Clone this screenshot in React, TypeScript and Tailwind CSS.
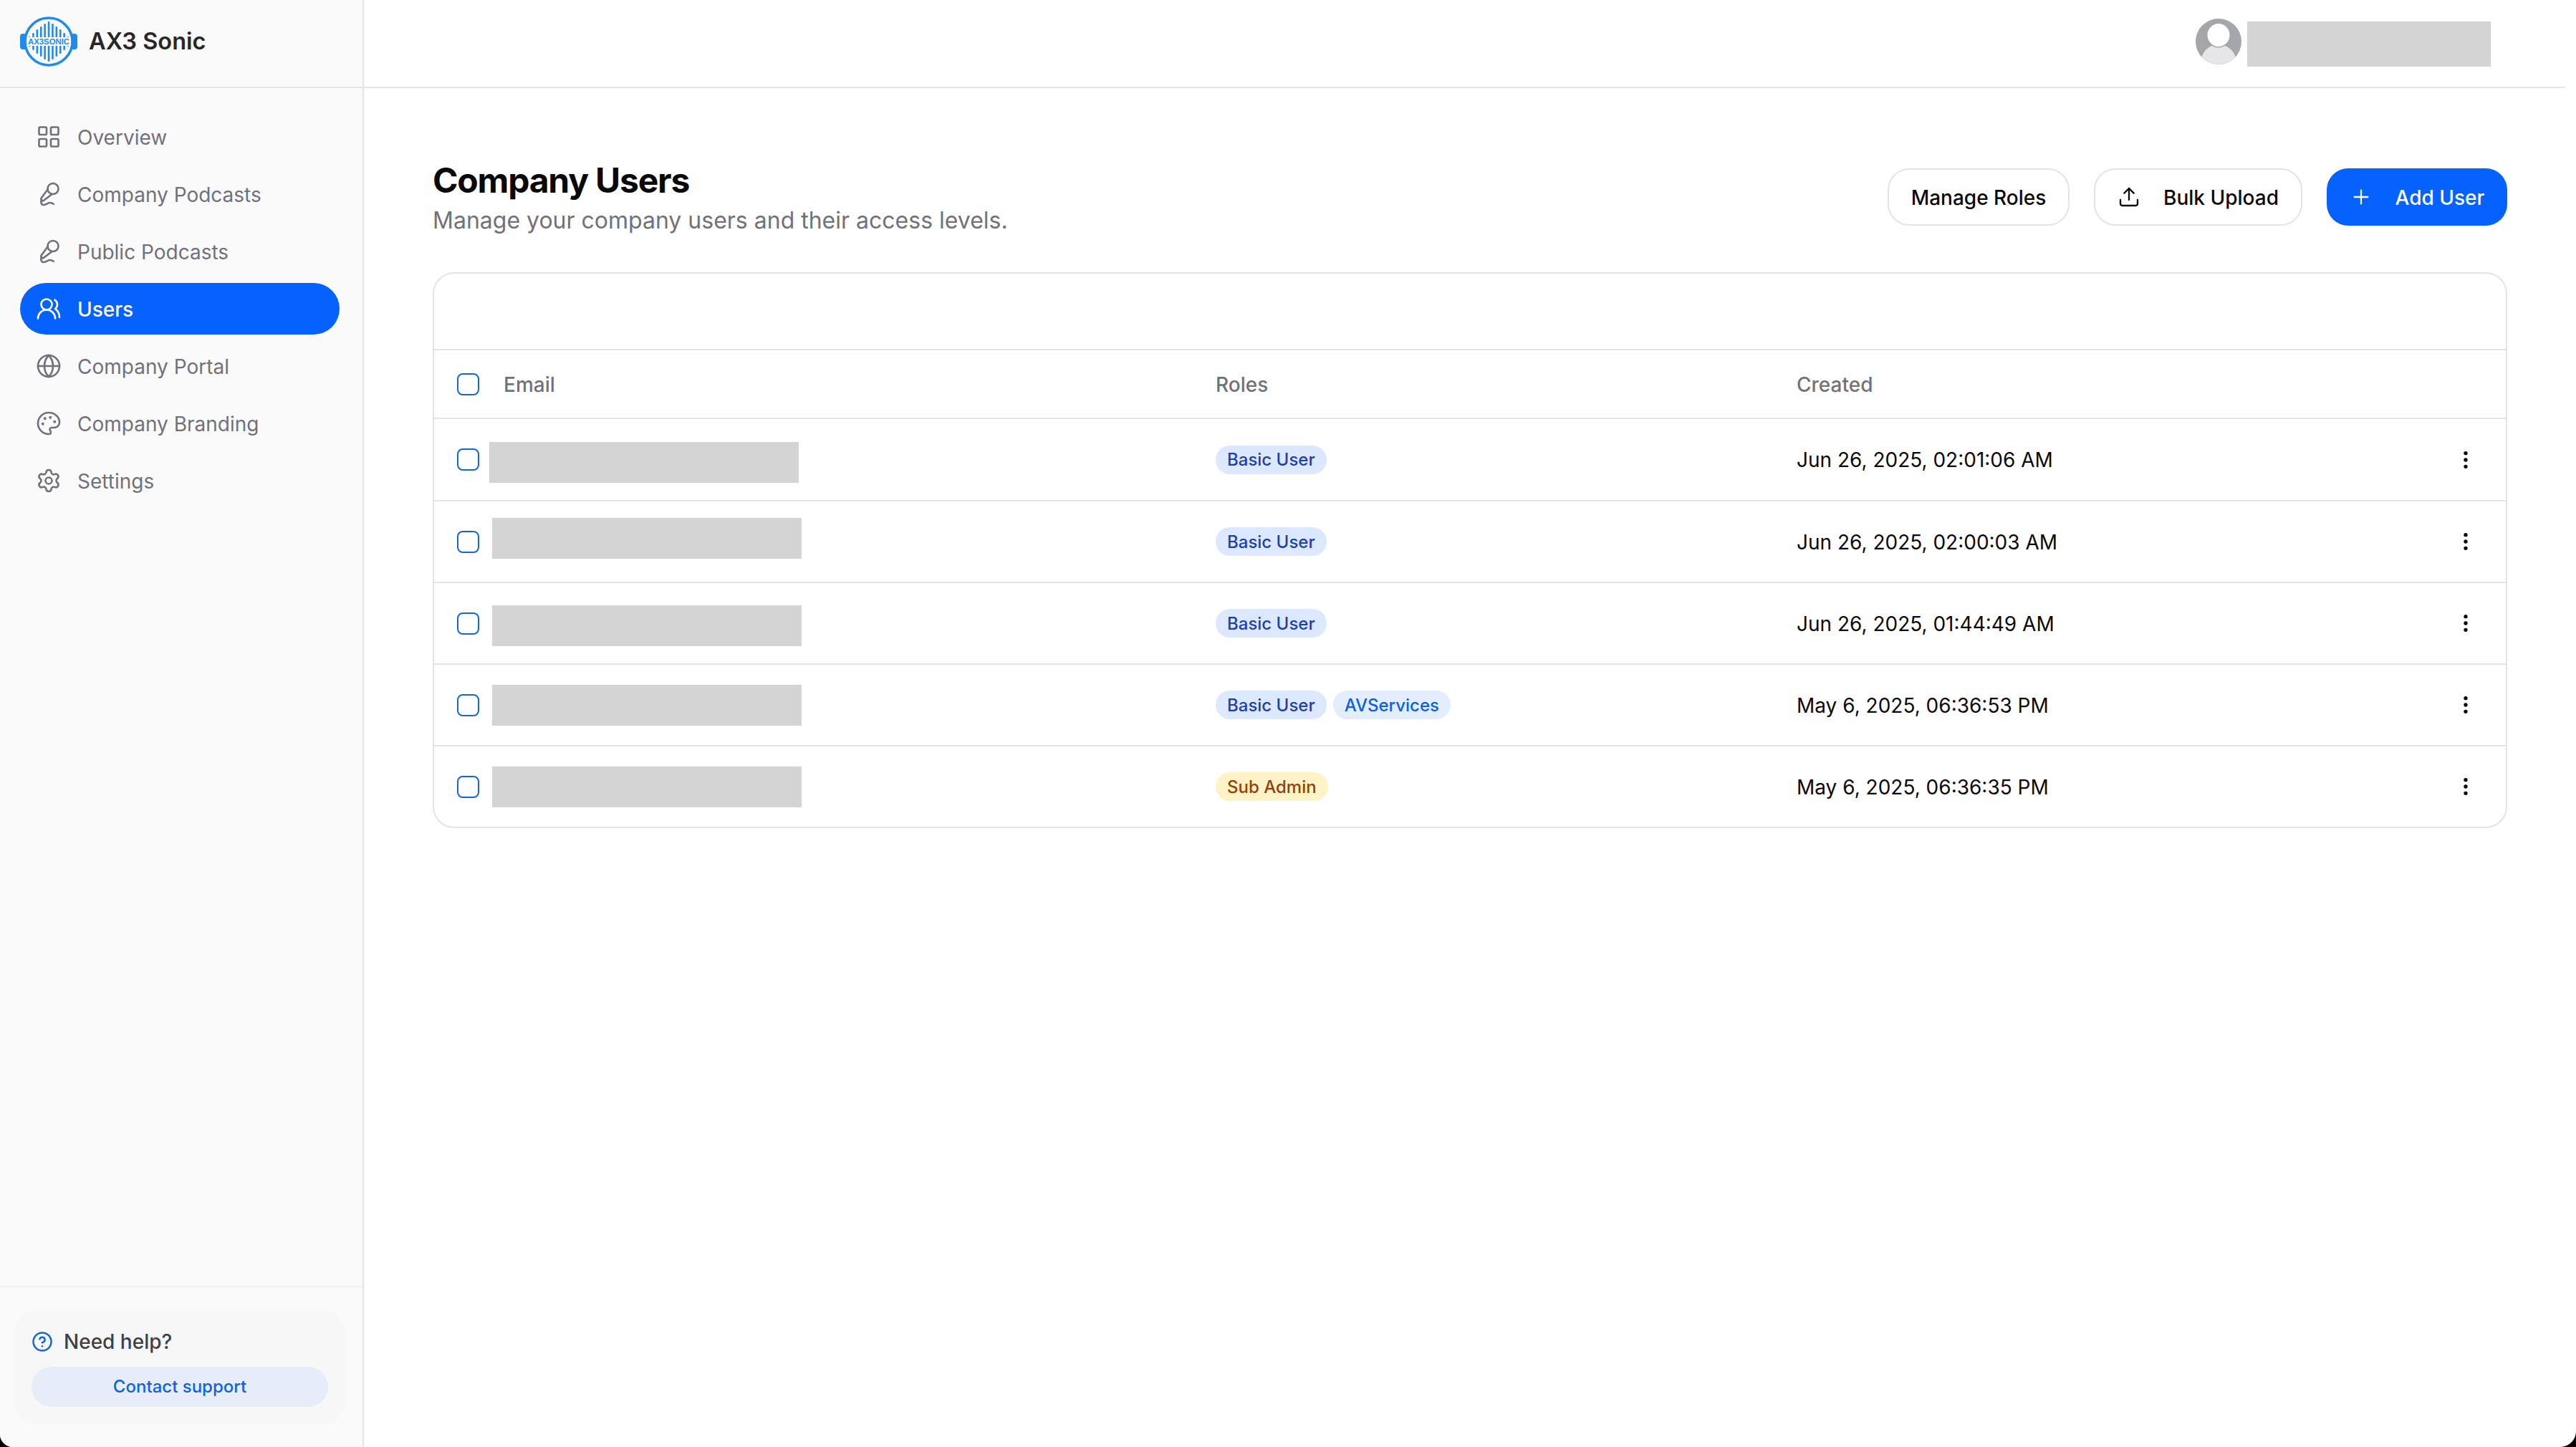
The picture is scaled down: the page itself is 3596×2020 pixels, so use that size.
import React from 'react';
import { LayoutGrid, MicVocal, UsersRound, Globe, Palette, Settings, CircleHelp, Upload, Plus, EllipsisVertical } from 'lucide-react';

const navItems = [
    { label: 'Overview', icon: LayoutGrid },
    { label: 'Company Podcasts', icon: MicVocal },
    { label: 'Public Podcasts', icon: MicVocal },
    { label: 'Users', icon: UsersRound, active: true },
    { label: 'Company Portal', icon: Globe },
    { label: 'Company Branding', icon: Palette },
    { label: 'Settings', icon: Settings },
];

const basic = 'bg-[#dbe8fd] text-[#1e40af]';
const avs = 'bg-[#e4edfd] text-[#0a5fe8]';
const sub = 'bg-[#fdf3c7] text-[#92400e]';

const rows = [
    { height: 'h-[115px] border-b-2 border-[#e4e4e7]', redact: 'ml-[14px] mt-[7px]', roles: [{ name: 'Basic User', cls: basic }], created: 'Jun 26, 2025, 02:01:06 AM' },
    { height: 'h-[114px] border-b-2 border-[#e4e4e7]', redact: 'ml-[18px] mb-[10px]', roles: [{ name: 'Basic User', cls: basic }], created: 'Jun 26, 2025, 02:00:03 AM' },
    { height: 'h-[114px] border-b-2 border-[#e4e4e7]', redact: 'ml-[18px] mt-[6px]', roles: [{ name: 'Basic User', cls: basic }], created: 'Jun 26, 2025, 01:44:49 AM' },
    { height: 'h-[114px] border-b-2 border-[#e4e4e7]', redact: 'ml-[18px] mt-[1px]', roles: [{ name: 'Basic User', cls: basic }, { name: 'AVServices', cls: avs }], created: 'May 6, 2025, 06:36:53 PM' },
    { height: 'h-[112px]', redact: 'ml-[18px]', roles: [{ name: 'Sub Admin', cls: sub }], created: 'May 6, 2025, 06:36:35 PM' },
];

const barHeights = [14, 24, 34, 42, 50, 56, 50, 42, 34, 24, 14];

const Logo = () => (
    <svg width="80" height="70" viewBox="0 0 80 70" className="shrink-0">
        <rect x="0" y="24" width="10" height="22" rx="4" fill="#1f8ceb" />
        <rect x="70" y="24" width="10" height="22" rx="4" fill="#1f8ceb" />
        <circle cx="40" cy="35" r="33" fill="#fafafa" stroke="#1f8ceb" strokeWidth="3.5" />
        {barHeights.map((h, i) => (
            <rect key={i} x={11.75 + i * 5.4} y={35 - h / 2} width="2.6" height={h} rx="1.3" fill="#1f8ceb" />
        ))}
        <rect x="9" y="29" width="62" height="12" fill="#fafafa" />
        <text x="40" y="39.2" textAnchor="middle" fontSize="11" fontWeight="700" fill="#1f8ceb" textLength="58" lengthAdjust="spacingAndGlyphs" fontFamily="Liberation Sans, sans-serif">AX3SONIC</text>
    </svg>
);

const Avatar = () => (
    <svg width="64" height="64" viewBox="0 0 64 64" className="shrink-0">
        <defs>
            <clipPath id="avatar-clip"><circle cx="32" cy="32" r="32" /></clipPath>
        </defs>
        <g clipPath="url(#avatar-clip)">
            <rect width="64" height="64" fill="#a5a6a9" />
            <ellipse cx="32" cy="62" rx="25" ry="26" fill="#e6e6e8" />
            <ellipse cx="32" cy="23" rx="17" ry="17.5" fill="#a5a6a9" />
            <ellipse cx="32" cy="23" rx="15.5" ry="16" fill="#ffffff" />
        </g>
    </svg>
);

const Redacted = ({ className }: { className: string }) => <div className={`bg-[#d4d4d4] ${className}`} />;

const Checkbox = () => <div className="w-[31px] h-[31px] shrink-0 rounded-[8px] border-2 border-[#1567d8] bg-white" />;

const App: React.FC = () => {
    return (
        <div className="w-[3596px] h-[2020px] bg-black overflow-hidden [font-family:Inter,sans-serif]">
            <div className="flex w-full h-full bg-white rounded-bl-[18px] rounded-br-[22px] overflow-hidden">
                <aside className="w-[508px] shrink-0 h-full flex flex-col bg-[#fafafa] border-r-2 border-[#e4e4e7]">
                    <div className="h-[123px] shrink-0 flex items-center gap-[16px] pl-[28px] pb-[5px] border-b-2 border-[#e4e4e7]">
                        <Logo />
                        <span className="text-[32.5px] font-semibold text-[#27272a]">AX3 Sonic</span>
                    </div>
                    <nav className="flex-1 flex flex-col gap-[8px] pt-[32px] pl-[28px] pr-[32px]">
                        {navItems.map(item => (
                            <div
                                key={item.label}
                                className={`h-[72px] flex items-center gap-[22px] pl-[22px] rounded-full text-[28px] ${item.active ? 'bg-[#0562ff] text-white font-medium' : 'text-[#71717a]'}`}
                            >
                                <item.icon size={36} strokeWidth={1.75} className="shrink-0" />
                                <span className="pt-[2px]">{item.label}</span>
                            </div>
                        ))}
                    </nav>
                    <div className="h-[225px] shrink-0 border-t-2 border-[#f1f1f2] pt-[31px] pl-[20px] pr-[24px]">
                        <div className="h-[160px] bg-[#f7f7f8] rounded-[32px] px-[24px] pt-[26px]">
                            <div className="flex items-center gap-[15px] h-[38px]">
                                <CircleHelp size={30} strokeWidth={2} className="text-[#1567d8] shrink-0" />
                                <span className="text-[28px] font-medium text-[#3f3f46]">Need help?</span>
                            </div>
                            <div className="mt-[16px] h-[56px] rounded-full bg-[#e6edf9] flex items-center justify-center text-[24px] font-medium text-[#0f62e0]">
                                Contact support
                            </div>
                        </div>
                    </div>
                </aside>

                <main className="w-[3072px] shrink-0 h-full flex flex-col">
                    <header className="h-[123px] shrink-0 flex items-start justify-end gap-[8px] pt-[26px] pr-[103px] border-b-2 border-[#e4e4e7]">
                        <Avatar />
                        <Redacted className="w-[340px] h-[63px] mt-[4px]" />
                    </header>
                    <div className="pt-[110px] pl-[96px] pr-[80px]">
                        <div className="flex items-start justify-between h-[147px]">
                            <div>
                                <h1 className="text-[48px] leading-[56px] font-bold tracking-[-0.025em] text-[#09090b] -mt-[9px]">Company Users</h1>
                                <p className="text-[32px] leading-[50px] mt-[3px] text-[#71717a]">Manage your company users and their access levels.</p>
                            </div>
                            <div className="flex items-center gap-[34px] pt-[2px]">
                                <button className="h-[80px] w-[254px] pt-[2px] rounded-[30px] border-2 border-[#e4e4e7] bg-white text-[28px] font-medium text-[#09090b]">Manage Roles</button>
                                <button className="h-[80px] w-[291px] rounded-[30px] border-2 border-[#e4e4e7] bg-white text-[28px] font-medium text-[#09090b] flex items-center justify-center gap-[32px]">
                                    <Upload size={32} strokeWidth={1.75} />
                                    <span className="pt-[2px]">Bulk Upload</span>
                                </button>
                                <button className="h-[80px] w-[252px] rounded-[30px] bg-[#0562ff] text-[28px] font-medium text-white flex items-center justify-center gap-[32px]">
                                    <Plus size={32} strokeWidth={1.75} />
                                    <span className="pt-[2px]">Add User</span>
                                </button>
                            </div>
                        </div>

                        <div className="rounded-[30px] border-2 border-[#e4e4e7] bg-white">
                            <div className="h-[107px] border-b-2 border-[#e4e4e7]" />
                            <div className="h-[96px] flex items-center border-b-2 border-[#e4e4e7] pl-[32px] text-[28px] font-medium text-[#71717a]">
                                <div className="w-[1059px] flex items-center gap-[34px]">
                                    <Checkbox />
                                    <span className="pt-[1px]">Email</span>
                                </div>
                                <div className="w-[811px] pt-[1px]">Roles</div>
                                <div className="pt-[1px]">Created</div>
                            </div>
                            {rows.map(row => (
                                <div key={row.created} className={`flex items-center pl-[32px] ${row.height}`}>
                                    <div className="w-[1059px] flex items-center">
                                        <Checkbox />
                                        <Redacted className={`w-[432px] h-[57px] ${row.redact}`} />
                                    </div>
                                    <div className="w-[811px] flex items-center gap-[9px]">
                                        {row.roles.map(role => (
                                            <span key={role.name} className={`h-[40px] px-[16px] pt-[1px] rounded-full flex items-center text-[24px] font-medium ${role.cls}`}>{role.name}</span>
                                        ))}
                                    </div>
                                    <div className="flex-1 pt-[1px] text-[28px] text-[#09090b]">{row.created}</div>
                                    <EllipsisVertical size={32} strokeWidth={2} className="text-[#09090b] mr-[40px] shrink-0" />
                                </div>
                            ))}
                        </div>
                    </div>
                </main>
            </div>
        </div>
    );
};

export default App;
